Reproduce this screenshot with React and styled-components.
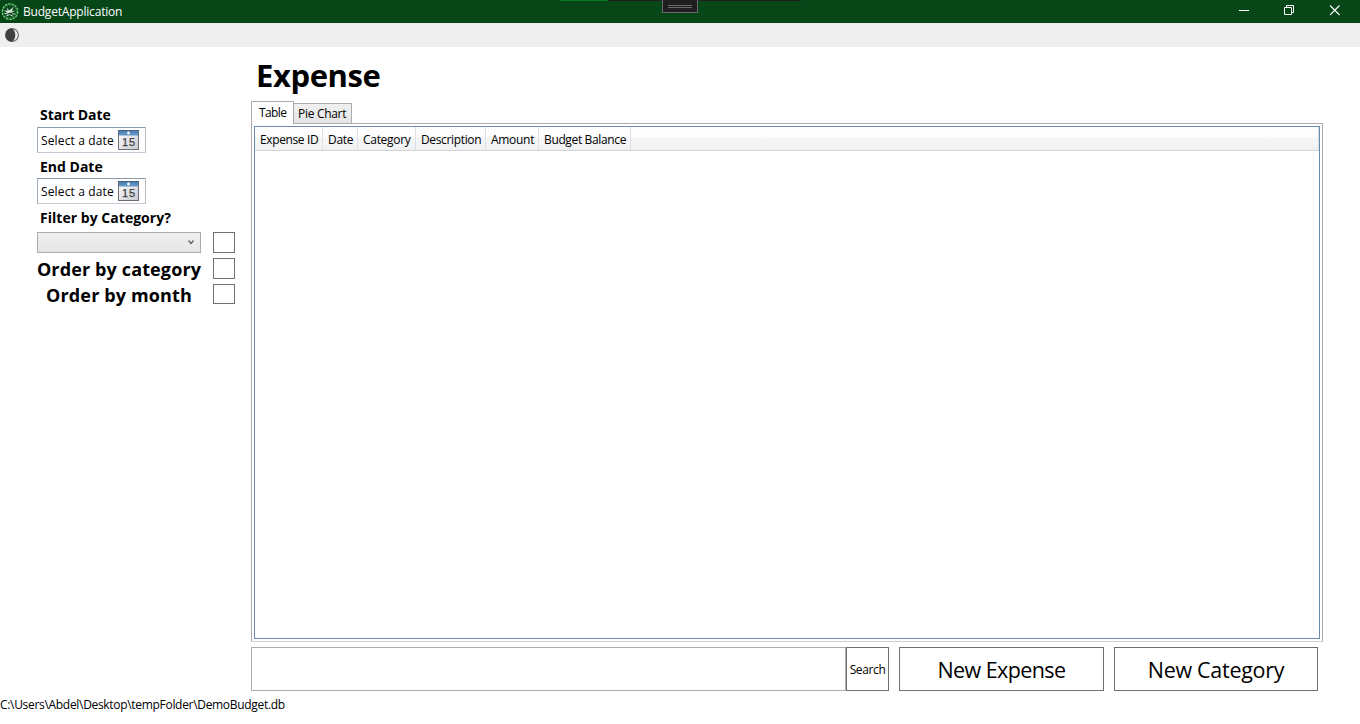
import React from "react";
import styled, { createGlobalStyle } from "styled-components";

const GlobalStyle = createGlobalStyle`
  * { box-sizing: border-box; }
  html, body { margin: 0; padding: 0; background: #fff; overflow: hidden; }
  body { font-family: "Open Sans", "Noto Sans", sans-serif; font-size: 12px; color: #000; }
  button, input { font-family: inherit; color: inherit; border-radius: 0; margin: 0; }
`;

const Window = styled.div`
  width: 1360px;
  height: 724px;
  display: flex;
  flex-direction: column;
  background: #fff;
`;

const TitleBar = styled.header`
  position: relative;
  height: 23px;
  flex: none;
  display: flex;
  align-items: center;
  background: #064617;
  color: #fff;
  padding: 0 4px 0 1px;
`;

const Label = styled.span`
  display: block;
  white-space: nowrap;
  font-size: ${(p) => p.$size || 12}px;
  font-weight: ${(p) => (p.$bold ? 700 : 400)};
  letter-spacing: ${(p) => p.$track || 0}px;
  line-height: ${(p) => p.$line || 16}px;
`;

const AppName = styled(Label)`
  margin-left: 4px;
  flex: 1;
`;

const Caption = styled.div`
  width: 45px;
  height: 23px;
  flex: none;
  display: flex;
  svg { display: block; }
`;

const Progress = styled.div`
  position: absolute;
  left: 560px;
  top: 0;
  width: 241px;
  height: 1px;
  background: linear-gradient(to right, #0a7a26 48px, #1f1f1f 48px);
`;

const DebugHandle = styled.div`
  position: absolute;
  left: 662px;
  top: 0;
  width: 36px;
  height: 13px;
  background: #1f1f1f;
  border: 1px solid #6a6a6a;
  border-top: 0;
  display: flex;
  flex-direction: column;
  align-items: center;
  gap: 1px;
  padding-top: 5px;
`;

const HandleLine = styled.i`
  width: 24px;
  height: 1px;
  background: #6a6a6a;
`;

const MenuBar = styled.nav`
  height: 24px;
  flex: none;
  background: #efefef;
  padding: 4px 0 0 4px;
`;

const Body = styled.main`
  flex: 1;
  display: flex;
  min-height: 0;
`;

const Sidebar = styled.aside`
  width: 251px;
  flex: none;
  padding: 58px 0 0 37px;
`;

const FieldLabel = styled(Label)`
  padding-left: 3px;
`;

const DatePicker = styled.div`
  width: 109px;
  height: 26px;
  display: flex;
  align-items: center;
  justify-content: space-between;
  border: 1px solid;
  border-color: #8a9aa8 #b4c1cb #c5ccd8 #a0afc3;
  padding: 0 6px 0 3px;
  margin: ${(p) => p.$margin};
`;

const DateText = styled(Label)`
  padding-top: 2px;
`;

const Filters = styled.div`
  display: flex;
  flex-direction: column;
  gap: 5px;
  padding-top: 4px;
`;

const FilterRow = styled.div`
  display: flex;
  height: 21px;
`;

const FilterCell = styled.div`
  width: 164px;
  margin-right: 12px;
  display: flex;
  justify-content: center;
`;

const Combo = styled.div`
  width: 164px;
  height: 21px;
  border: 1px solid #acacac;
  background: linear-gradient(#f0f0f0, #e5e5e5);
  display: flex;
  justify-content: flex-end;
  padding: 6px 5px 0 0;
`;

const Check = styled.div`
  width: 22px;
  height: ${(p) => p.$height || 21}px;
  border: 1px solid #707070;
  background: #fff;
`;

const Content = styled.section`
  width: 1072px;
  display: flex;
  flex-direction: column;
`;

const Heading = styled(Label).attrs({ as: "h1" })`
  margin: 5px 0 0 5px;
  height: 49px;
`;

const Tabs = styled.div`
  display: flex;
  align-items: flex-end;
  height: 23px;
  margin-bottom: -1px;
  position: relative;
`;

const Tab = styled.div`
  display: flex;
  height: ${(p) => (p.$active ? 23 : 21)}px;
  width: ${(p) => p.$width}px;
  padding: ${(p) => (p.$active ? "3px 0 0 7px" : "2px 0 0 4px")};
  border: 1px solid #acacac;
  border-bottom-width: ${(p) => (p.$active ? 0 : 1)}px;
  border-left-width: ${(p) => (p.$active ? 1 : 0)}px;
  background: ${(p) => (p.$active ? "#fff" : "linear-gradient(#f0f0f0, #e5e5e5)")};
`;

const TabPanel = styled.div`
  height: 519px;
  border: 1px solid #acacac;
  border-bottom-color: #d0d0d4;
  padding: 2px;
`;

const Grid = styled.div`
  height: 513px;
  border: 1px solid #688caf;
`;

const HeaderRow = styled.div`
  display: flex;
  height: 24px;
  border-bottom: 1px solid #d3d3d3;
  border-right: 1px solid #dcdcdc;
  background: linear-gradient(#fff 0, #fdfdfd 40%, #f5f6f7 50%, #f0f1f3 100%);
`;

const HeaderCell = styled.div`
  width: ${(p) => p.$width}px;
  padding: 5px 0 0 5px;
  border-right: 1px solid #dedfe1;
`;

const Footer = styled.div`
  display: flex;
  height: 44px;
  margin-top: 5px;
`;

const SearchInput = styled.input`
  width: 595px;
  height: 44px;
  border: 1px solid #abadb3;
  background: #fff;
  outline: none;
`;

const Button = styled.button`
  width: ${(p) => p.$width}px;
  height: 44px;
  margin-left: ${(p) => p.$gap || 0}px;
  padding: ${(p) => p.$top || 0}px 0 0;
  background: #fff;
  border: 1px solid #707070;
  display: flex;
  align-items: center;
  justify-content: center;
`;

const StatusBar = styled.footer`
  height: 28px;
  flex: none;
  padding-top: 1px;
`;

const AppIcon = () => (
  <svg width="18" height="18" viewBox="0 0 18 18" fill="none">
    <circle cx="9" cy="8.6" r="7.7" stroke="#6fdc7c" strokeWidth="1.2" strokeDasharray="2.6 .8" />
    <path d="M3.2 7.6l3.4.2-.9-3.2 2.6 2.8 4.2-3.6-1.6 4.2 3.4-.6-3.2 2.2-4.6.6z" fill="#d4e2d6" />
    <path d="M3.6 10.4l3.6.6M5.4 13l3.2-1.4 3.4 1.6M11 10.8l3.4.2" stroke="#cfdfd2" strokeWidth="1" />
    <circle cx="9" cy="8.6" r="6.2" stroke="#a9c4ae" strokeWidth=".6" strokeDasharray="1.2 1.6" />
  </svg>
);

const ThemeIcon = () => (
  <svg width="16" height="16" viewBox="0 0 16 16" display="block">
    <circle cx="8" cy="8" r="6.4" fill="#efefef" stroke="#666" strokeWidth="1.1" />
    <path d="M8 1.4A6.6 6.6 0 1 0 8 14.6C12.4 12.2 12.4 3.8 8 1.4z" fill="#404040" />
  </svg>
);

const CalendarIcon = () => (
  <svg width="21" height="20" viewBox="0 0 21 20">
    <defs>
      <linearGradient id="page" x1="0" y1="0" x2="1" y2="1">
        <stop offset="0" stopColor="#fff" />
        <stop offset="1" stopColor="#c9cbd0" />
      </linearGradient>
      <linearGradient id="band" x1="0" y1="0" x2="0" y2="1">
        <stop offset="0" stopColor="#477fb5" />
        <stop offset="1" stopColor="#699bca" />
      </linearGradient>
    </defs>
    <rect x=".5" y=".5" width="20" height="19" fill="url(#page)" stroke="#6b6f75" />
    <rect x="1" y="1" width="19" height="4.5" fill="url(#band)" />
    <path d="M0 .5h21" stroke="#49617a" />
    <circle cx="10.5" cy="3" r="1.4" fill="#fff" />
    <text x="10.6" y="16" textAnchor="middle" fontFamily="Liberation Sans, sans-serif" fontSize="11" fill="#3d3f43" stroke="#3d3f43" strokeWidth=".25" textLength="13">15</text>
  </svg>
);

const columns = [
  { name: "Expense ID", width: 68, track: -0.38 },
  { name: "Date", width: 35, track: -0.3 },
  { name: "Category", width: 58, track: -0.3 },
  { name: "Description", width: 70, track: -0.35 },
  { name: "Amount", width: 53, track: -0.3 },
  { name: "Budget Balance", width: 92, track: -0.36 },
];

export default function App() {
  return (
    <Window>
      <GlobalStyle />
      <TitleBar>
        <AppIcon />
        <AppName $track={-0.2}>BudgetApplication</AppName>
        <Progress />
        <DebugHandle><HandleLine /><HandleLine /></DebugHandle>
        <Caption>
          <svg width="45" height="23"><path d="M18 10.5h10" stroke="#fff" /></svg>
        </Caption>
        <Caption>
          <svg width="45" height="23" fill="none" stroke="#fff">
            <path d="M18.5 7.5h7v7h-7zM20.5 7.5v-2h7v7h-2" />
          </svg>
        </Caption>
        <Caption>
          <svg width="45" height="23"><path d="M19 5.5l9.5 9.5M28.5 5.5L19 15" stroke="#fff" strokeWidth="1.1" /></svg>
        </Caption>
      </TitleBar>
      <MenuBar><ThemeIcon /></MenuBar>
      <Body>
        <Sidebar>
          <FieldLabel $size={14} $bold $track={-0.08} $line={20}>Start Date</FieldLabel>
          <DatePicker $margin="2px 0 4px">
            <DateText $track={0.14}>Select a date</DateText>
            <CalendarIcon />
          </DatePicker>
          <FieldLabel $size={14} $bold $line={20}>End Date</FieldLabel>
          <DatePicker $margin="1px 0 4px">
            <DateText $track={0.14}>Select a date</DateText>
            <CalendarIcon />
          </DatePicker>
          <FieldLabel $size={14} $bold $track={0.03} $line={20}>Filter by Category?</FieldLabel>
          <Filters>
            <FilterRow>
              <FilterCell>
                <Combo>
                  <svg width="8" height="7" fill="none"><path d="M1.5 1.5l2.5 3 2.5-3" stroke="#606060" strokeWidth="1.3" /></svg>
                </Combo>
              </FilterCell>
              <Check />
            </FilterRow>
            <FilterRow>
              <FilterCell><Label $size={18} $bold $track={0.13} $line={22}>Order by category</Label></FilterCell>
              <Check />
            </FilterRow>
            <FilterRow>
              <FilterCell><Label $size={18} $bold $track={0.13} $line={22}>Order by month</Label></FilterCell>
              <Check $height={20} />
            </FilterRow>
          </Filters>
        </Sidebar>
        <Content>
          <Heading $size={31} $bold $track={-0.4} $line={46}>Expense</Heading>
          <Tabs>
            <Tab $active $width={43}><Label $track={-0.6}>Table</Label></Tab>
            <Tab $width={58}><Label $track={-0.3}>Pie Chart</Label></Tab>
          </Tabs>
          <TabPanel>
            <Grid>
              <HeaderRow>
                {columns.map((c) => (
                  <HeaderCell key={c.name} $width={c.width}>
                    <Label $track={c.track}>{c.name}</Label>
                  </HeaderCell>
                ))}
              </HeaderRow>
            </Grid>
          </TabPanel>
          <Footer>
            <SearchInput aria-label="Search" />
            <Button $width={43} $top={2}><Label $track={-0.38}>Search</Label></Button>
            <Button $width={205} $gap={10} $top={2}><Label $size={21.5} $line={30} $track={-0.58}>New Expense</Label></Button>
            <Button $width={204} $gap={10} $top={2}><Label $size={21.5} $line={30} $track={-0.28}>New Category</Label></Button>
          </Footer>
        </Content>
      </Body>
      <StatusBar><Label $track={-0.31}>C:\Users\Abdel\Desktop\tempFolder\DemoBudget.db</Label></StatusBar>
    </Window>
  );
}
